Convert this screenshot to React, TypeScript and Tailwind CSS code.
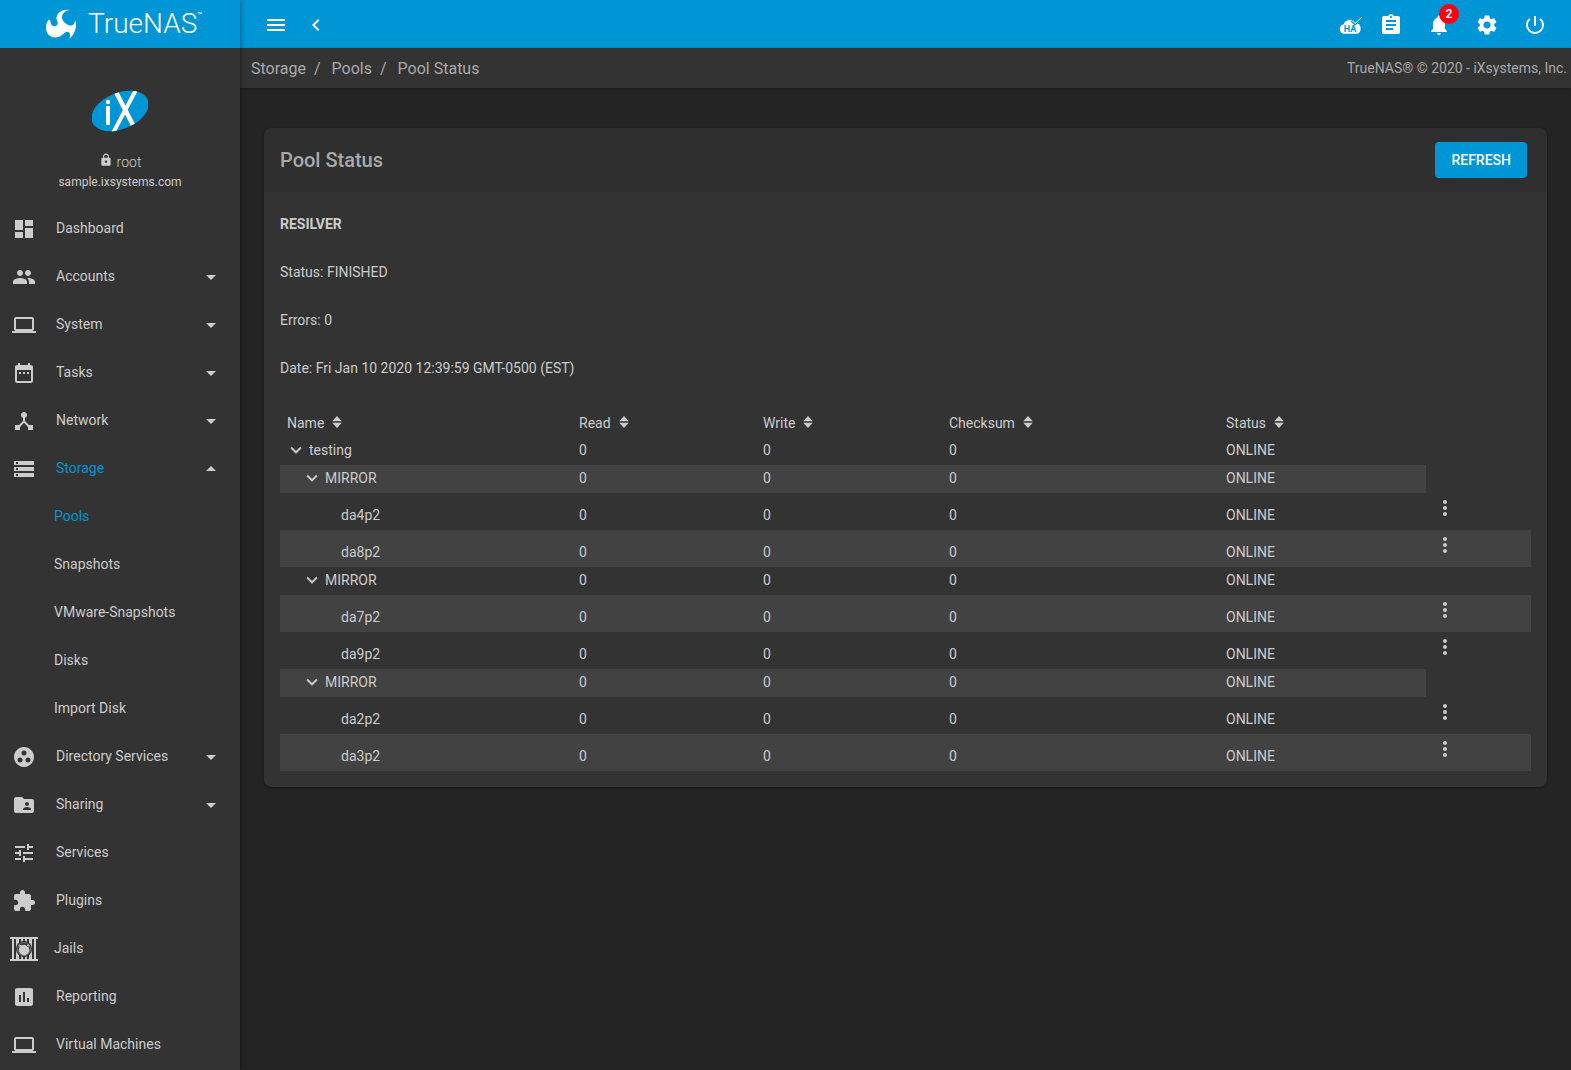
import type { ReactNode } from 'react'
import type { IconType } from 'react-icons'
import {
  MdArrowDropDown,
  MdArrowDropUp,
  MdAssessment,
  MdAssignment,
  MdChevronLeft,
  MdDashboard,
  MdDateRange,
  MdDeviceHub,
  MdExpandMore,
  MdExtension,
  MdFolderShared,
  MdGroupWork,
  MdLaptop,
  MdLock,
  MdMenu,
  MdMoreVert,
  MdNotifications,
  MdPeople,
  MdPowerSettingsNew,
  MdSettings,
  MdStorage,
  MdTune,
} from 'react-icons/md'

interface NavItem {
  label: string
  icon: IconType
  expandable?: boolean
  open?: boolean
  children?: string[]
}

interface PoolRow {
  name: string
  level: number
  disk?: boolean
}

const navItems: NavItem[] = [
  { label: 'Dashboard', icon: MdDashboard },
  { label: 'Accounts', icon: MdPeople, expandable: true },
  { label: 'System', icon: MdLaptop, expandable: true },
  { label: 'Tasks', icon: MdDateRange, expandable: true },
  { label: 'Network', icon: MdDeviceHub, expandable: true },
  {
    label: 'Storage',
    icon: MdStorage,
    expandable: true,
    open: true,
    children: ['Pools', 'Snapshots', 'VMware-Snapshots', 'Disks', 'Import Disk'],
  },
  { label: 'Directory Services', icon: MdGroupWork, expandable: true },
  { label: 'Sharing', icon: MdFolderShared, expandable: true },
  { label: 'Services', icon: MdTune },
  { label: 'Plugins', icon: MdExtension },
  { label: 'Jails', icon: JailIcon },
  { label: 'Reporting', icon: MdAssessment },
  { label: 'Virtual Machines', icon: MdLaptop },
]

const rows: PoolRow[] = [
  { name: 'testing', level: 0 },
  { name: 'MIRROR', level: 1 },
  { name: 'da4p2', level: 2, disk: true },
  { name: 'da8p2', level: 2, disk: true },
  { name: 'MIRROR', level: 1 },
  { name: 'da7p2', level: 2, disk: true },
  { name: 'da9p2', level: 2, disk: true },
  { name: 'MIRROR', level: 1 },
  { name: 'da2p2', level: 2, disk: true },
  { name: 'da3p2', level: 2, disk: true },
]

const columns = ['Name', 'Read', 'Write', 'Checksum', 'Status']
const indents = ['pl-[5px]', 'pl-[21px]', 'pl-[61px]']

function JailIcon() {
  return (
    <svg viewBox="0 0 28 24" className="mt-0.5 h-6 w-7 shrink-0" fill="currentColor">
      <path d="M0 0h28v2H0zM0 22h28v2H0zM2 2h2v20H2zM6 2h3v20H6zM11 2h2v20h-2zM15 2h2v20h-2zM19 2h3v20h-3zM24 2h2v20h-2z" />
      <circle cx="14" cy="12" r="8" fill="#333" />
      <circle cx="14" cy="12" r="6.5" fill="none" stroke="currentColor" strokeWidth="0.8" opacity="0.5" />
      <path d="M9 7.500l2.500.8q2.500-1.200 5 0l2.500-1.300-.5 3.200a5.200 5.200 0 1 1-9 .3z" />
      <path d="M16 8l2 2" stroke="#333" strokeWidth="0.8" />
    </svg>
  )
}

function TrueNasMark() {
  return (
    <svg viewBox="0 0 30 30" className="h-[30px] w-[30px]" fill="#fff" aria-hidden="true">
      <path d="M24 1C17-.5 11 3.500 10.500 8.500c-.3 3.500 2 4.500 1 7C10.300 18 6.500 18 5 15c-.8-2 0-4-2-4.500C1 12 0 15 0 19c0 5.500 4 9.500 9 9.500 6 0 8-4 11-5.500 3-1 5 1 3.500 6.500C27 27 29.500 22 30 17c0-3-.3-4.500-1-5.500-.3 3.500-2 5.300-5 5-3.500-.5-7.500-4.300-8-7.500C15.500 5 19 1.500 24 1z" />
    </svg>
  )
}

function IxLogo() {
  return (
    <svg viewBox="0 0 56 42" className="h-[42px] w-14" aria-label="iXsystems">
      <clipPath id="ix-oval">
        <ellipse cx="28" cy="21" rx="30" ry="18.200" transform="rotate(-22 28 21)" />
      </clipPath>
      <g clipPath="url(#ix-oval)">
        <rect width="56" height="42" fill="#0095d5" />
        <path d="M24 2l17 33" stroke="#fff" strokeWidth="4.500" />
        <path d="M45-2L21 43" stroke="#fff" strokeWidth="4" />
        <path d="M14 16h4v19h-4z" fill="#fff" />
        <circle cx="16" cy="12" r="2.200" fill="#fff" />
      </g>
    </svg>
  )
}

function HaIcon() {
  return (
    <svg viewBox="0 0 24 20" className="h-5 w-6" aria-hidden="true">
      <path d="M5.500 18.800a4.800 4.800 0 0 1-.8-9.500A6.500 6.500 0 0 1 16.600 8.300a5.300 5.300 0 0 1 .8 10.500z" fill="#fff" />
      <path d="M12.500 5.500l3.500 3.500L23.500 2" fill="none" stroke="#0095d5" strokeWidth="2.500" />
      <path d="M13 5.500l3 3L23 2" fill="none" stroke="#fff" strokeWidth="1" />
      <text x="11" y="17" textAnchor="middle" fontFamily="Roboto" fontWeight="700" fontSize="9" fill="#0095d5">
        HA
      </text>
    </svg>
  )
}

function SortIcon() {
  return (
    <svg viewBox="0 0 10 12" className="mb-0.5 h-3 w-[10px]" fill="currentColor" aria-hidden="true">
      <path d="M5 0l4.800 5.200H.2zM5 12L.2 6.800h9.600z" />
    </svg>
  )
}

function IconButton({ label, children }: { label: string; children: ReactNode }) {
  return (
    <button aria-label={label} className="relative flex h-12 w-12 items-center justify-center">
      {children}
    </button>
  )
}

function Sidebar() {
  return (
    <aside className="z-10 flex w-60 shrink-0 flex-col bg-[#333] shadow-[1px_0_4px_rgba(0,0,0,0.35)]">
      <a href="#" className="flex h-12 items-center bg-[#0095d5] pl-[46px] text-white">
        <TrueNasMark />
        <span className="ml-3 text-[28px] leading-[46px] font-light">TrueNAS</span>
        <span className="mb-4 text-[8px] leading-3">™</span>
      </a>
      <div className="flex h-[156px] flex-col items-center pt-[42px]">
        <IxLogo />
        <div className="mt-5 flex items-center gap-1 text-sm leading-5 font-light">
          <MdLock className="mb-1 h-[14px] w-[14px]" />
          root
        </div>
        <div className="text-xs leading-5">sample.ixsystems.com</div>
      </div>
      <nav>
        {navItems.map((item) => {
          const Icon = item.icon
          const Arrow = item.open ? MdArrowDropUp : MdArrowDropDown
          const jail = item.label === 'Jails'
          return (
            <div key={item.label}>
              <a href="#" className={`flex h-12 items-center pr-[17px] ${jail ? 'gap-4 pl-[10px]' : 'gap-5 pl-3'}`}>
                {jail ? <JailIcon /> : <Icon className="mt-0.5 h-6 w-6 shrink-0" />}
                <span className={`flex-1 ${item.open ? 'text-[#0095d5]' : ''}`}>{item.label}</span>
                {item.expandable && <Arrow className="mt-0.5 h-6 w-6" />}
              </a>
              {item.children?.map((child) => (
                <a
                  key={child}
                  href="#"
                  className={`flex h-12 items-center pl-[54px] ${child === 'Pools' ? 'text-[#0095d5]' : ''}`}
                >
                  {child}
                </a>
              ))}
            </div>
          )
        })}
      </nav>
    </aside>
  )
}

function TopBar() {
  return (
    <header className="flex h-12 items-center bg-[#0095d5] pt-0.5 pr-3 pl-3 text-white">
      <IconButton label="Toggle menu">
        <MdMenu className="h-6 w-6" />
      </IconButton>
      <button aria-label="Collapse menu" className="flex h-12 w-8 items-center justify-center">
        <MdChevronLeft className="h-6 w-6" />
      </button>
      <div className="flex-1" />
      <button aria-label="HA status" className="flex h-12 w-8 items-center justify-center">
        <HaIcon />
      </button>
      <IconButton label="Task manager">
        <MdAssignment className="h-6 w-6" />
      </IconButton>
      <IconButton label="Alerts">
        <MdNotifications className="h-6 w-6" />
        <span className="absolute top-[3px] right-1 flex h-5 w-5 items-center justify-center rounded-full bg-[#ff0013] text-xs font-semibold">
          2
        </span>
      </IconButton>
      <IconButton label="Settings">
        <MdSettings className="h-6 w-6" />
      </IconButton>
      <IconButton label="Power">
        <MdPowerSettingsNew className="h-6 w-6" />
      </IconButton>
    </header>
  )
}

function Breadcrumbs() {
  return (
    <div className="flex h-10 items-center justify-between bg-[#333] pr-1 pl-[11px] text-[#a9a9a9] shadow-[0_1px_3px_rgba(0,0,0,0.3)]">
      <div className="flex pt-0.5 text-base">
        <a href="#">Storage</a>
        <span className="mr-[11px] ml-2">/</span>
        <a href="#">Pools</a>
        <span className="mr-[11px] ml-2">/</span>
        <span>Pool Status</span>
      </div>
      <div>TrueNAS® © 2020 - iXsystems, Inc.</div>
    </div>
  )
}

function PoolTable() {
  return (
    <table className="w-full table-fixed border-collapse text-left">
      <colgroup>
        <col className="w-[292px]" />
        <col className="w-[184px]" />
        <col className="w-[186px]" />
        <col className="w-[277px]" />
        <col className="w-[207px]" />
        <col className="w-[105px]" />
      </colgroup>
      <thead>
        <tr className="h-[29px]">
          {columns.map((col) => (
            <th key={col} className="p-0 pl-[7px] font-normal">
              <button className="flex items-center gap-2">
                {col}
                <SortIcon />
              </button>
            </th>
          ))}
        </tr>
      </thead>
      <tbody>
        {rows.map((row, i) => {
          const stripe = i % 2 === 1 ? 'bg-[#424242]' : ''
          const cell = `p-0 pl-[7px] align-top ${row.disk ? 'pt-3' : 'pt-[3px]'} ${stripe}`
          return (
            <tr key={i} className={row.disk ? 'h-[37px]' : 'h-7'}>
              <td className={`p-0 align-top ${row.disk ? 'pt-3' : 'pt-0.5'} ${indents[row.level]} ${stripe}`}>
                <div className="flex items-center gap-0.5">
                  {!row.disk && (
                    <button aria-label={`Collapse ${row.name}`}>
                      <MdExpandMore className="h-[22px] w-[22px]" />
                    </button>
                  )}
                  {row.name}
                </div>
              </td>
              <td className={cell}>0</td>
              <td className={cell}>0</td>
              <td className={cell}>0</td>
              <td className={cell}>ONLINE</td>
              {row.disk && (
                <td className={`p-0 pt-[3px] pl-[7px] align-top ${stripe}`}>
                  <button aria-label={`${row.name} options`} className="block">
                    <MdMoreVert className="h-6 w-6" />
                  </button>
                </td>
              )}
            </tr>
          )
        })}
      </tbody>
    </table>
  )
}

export default function App() {
  return (
    <div className="flex min-h-screen bg-[#242424] font-[Roboto,sans-serif] text-sm text-[#ccc]">
      <Sidebar />
      <div className="min-w-0 flex-1">
        <TopBar />
        <Breadcrumbs />
        <main className="px-6 pt-10">
          <section className="rounded-lg bg-[#333] shadow-[0_1px_3px_rgba(0,0,0,0.4)]">
            <div className="flex h-16 items-center justify-between rounded-t-lg bg-[#2f2f2f] pr-5 pl-4">
              <h1 className="text-xl font-medium text-[#a9a9a9]">Pool Status</h1>
              <button className="h-9 rounded bg-[#0095d5] px-4 font-medium text-white">REFRESH</button>
            </div>
            <div className="px-4 pt-2 pb-4">
              <div className="mb-4 leading-[48px]">
                <p className="font-bold">RESILVER</p>
                <p>Status: FINISHED</p>
                <p>Errors: 0</p>
                <p>Date: Fri Jan 10 2020 12:39:59 GMT-0500 (EST)</p>
              </div>
              <PoolTable />
            </div>
          </section>
        </main>
      </div>
    </div>
  )
}
